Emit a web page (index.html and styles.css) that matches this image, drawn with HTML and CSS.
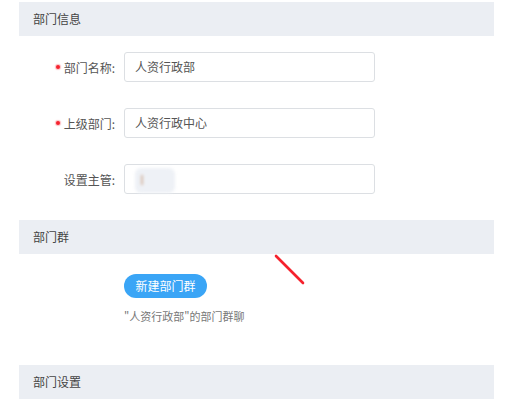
FILE: index.html
```html
<!DOCTYPE html>
<html lang="zh">
<head>
<meta charset="utf-8">
<link rel="stylesheet" href="styles.css">
</head>
<body>
<div class="page">
  <div class="section-head head-first">部门信息</div>
  <div class="form">
    <div class="row">
      <label class="label"><span class="req"></span>部门名称:</label>
      <div class="input">人资行政部</div>
    </div>
    <div class="row">
      <label class="label"><span class="req"></span>上级部门:</label>
      <div class="input">人资行政中心</div>
    </div>
    <div class="row">
      <label class="label">设置主管:</label>
      <div class="input"><span class="chip"><span class="chip-mark"></span></span></div>
    </div>
  </div>
  <div class="section-head">部门群</div>
  <div class="group">
    <button class="btn">新建部门群</button>
    <div class="caption">"人资行政部"的部门群聊</div>
  </div>
  <div class="section-head head-last">部门设置</div>
</div>
<svg class="annot" width="40" height="40" viewBox="0 0 40 40">
  <line x1="3" y1="3" x2="30" y2="30" stroke="#f5222d" stroke-width="2.6" stroke-linecap="round"/>
</svg>
</body>
</html>
```

FILE: styles.css
```css
html, body {
  margin: 0;
  padding: 0;
  background: #ffffff;
}
body {
  font-family: "Noto Sans CJK SC", "Noto Sans", sans-serif;
  font-size: 12px;
  color: #333;
  position: relative;
  width: 511px;
  height: 413px;
  overflow: hidden;
}
.page {
  padding: 2px 0 0 19px;
  width: 475px;
}
.section-head {
  height: 34px;
  line-height: 33px;
  background: #ebeef3;
  padding-left: 14px;
  color: #444;
  font-size: 12px;
}
.form {
  display: flex;
  flex-direction: column;
  gap: 26px;
  padding: 16px 0 26px;
}
.row {
  display: flex;
  align-items: center;
  height: 30px;
}
.label {
  width: 96px;
  margin-right: 9px;
  text-align: right;
  color: #555;
  font-size: 12px;
  display: flex;
  justify-content: flex-end;
  align-items: center;
}
.req {
  width: 4px;
  height: 4px;
  border-radius: 50%;
  background: #f5222d;
  margin-right: 4px;
  box-shadow: 0 0 1px 1px rgba(245, 34, 45, 0.3);
}
.input {
  width: 251px;
  height: 30px;
  box-sizing: border-box;
  border: 1px solid #dcdfe3;
  border-radius: 3px;
  padding-left: 10px;
  line-height: 28px;
  color: #555;
  font-size: 12px;
  display: flex;
  align-items: center;
}
.chip {
  display: inline-block;
  width: 40px;
  height: 25px;
  margin-top: 3px;
  background: #eef1f6;
  border-radius: 6px;
  filter: blur(1.5px);
  position: relative;
}
.chip-mark {
  position: absolute;
  left: 6px;
  top: 7px;
  width: 2px;
  height: 10px;
  background: #d4b8a8;
}
.group {
  padding: 20px 0 0 105px;
  height: 91px;
}
.btn {
  display: block;
  width: 83px;
  height: 24px;
  border: none;
  border-radius: 12px;
  background: #3aa5f6;
  color: #fff;
  font-family: "Noto Sans CJK SC", "Noto Sans", sans-serif;
  font-size: 12px;
  padding: 0;
  line-height: 24px;
}
.caption {
  margin-top: 10px;
  color: #777;
  font-size: 11px;
}
.annot {
  position: absolute;
  left: 273px;
  top: 253px;
}
```
